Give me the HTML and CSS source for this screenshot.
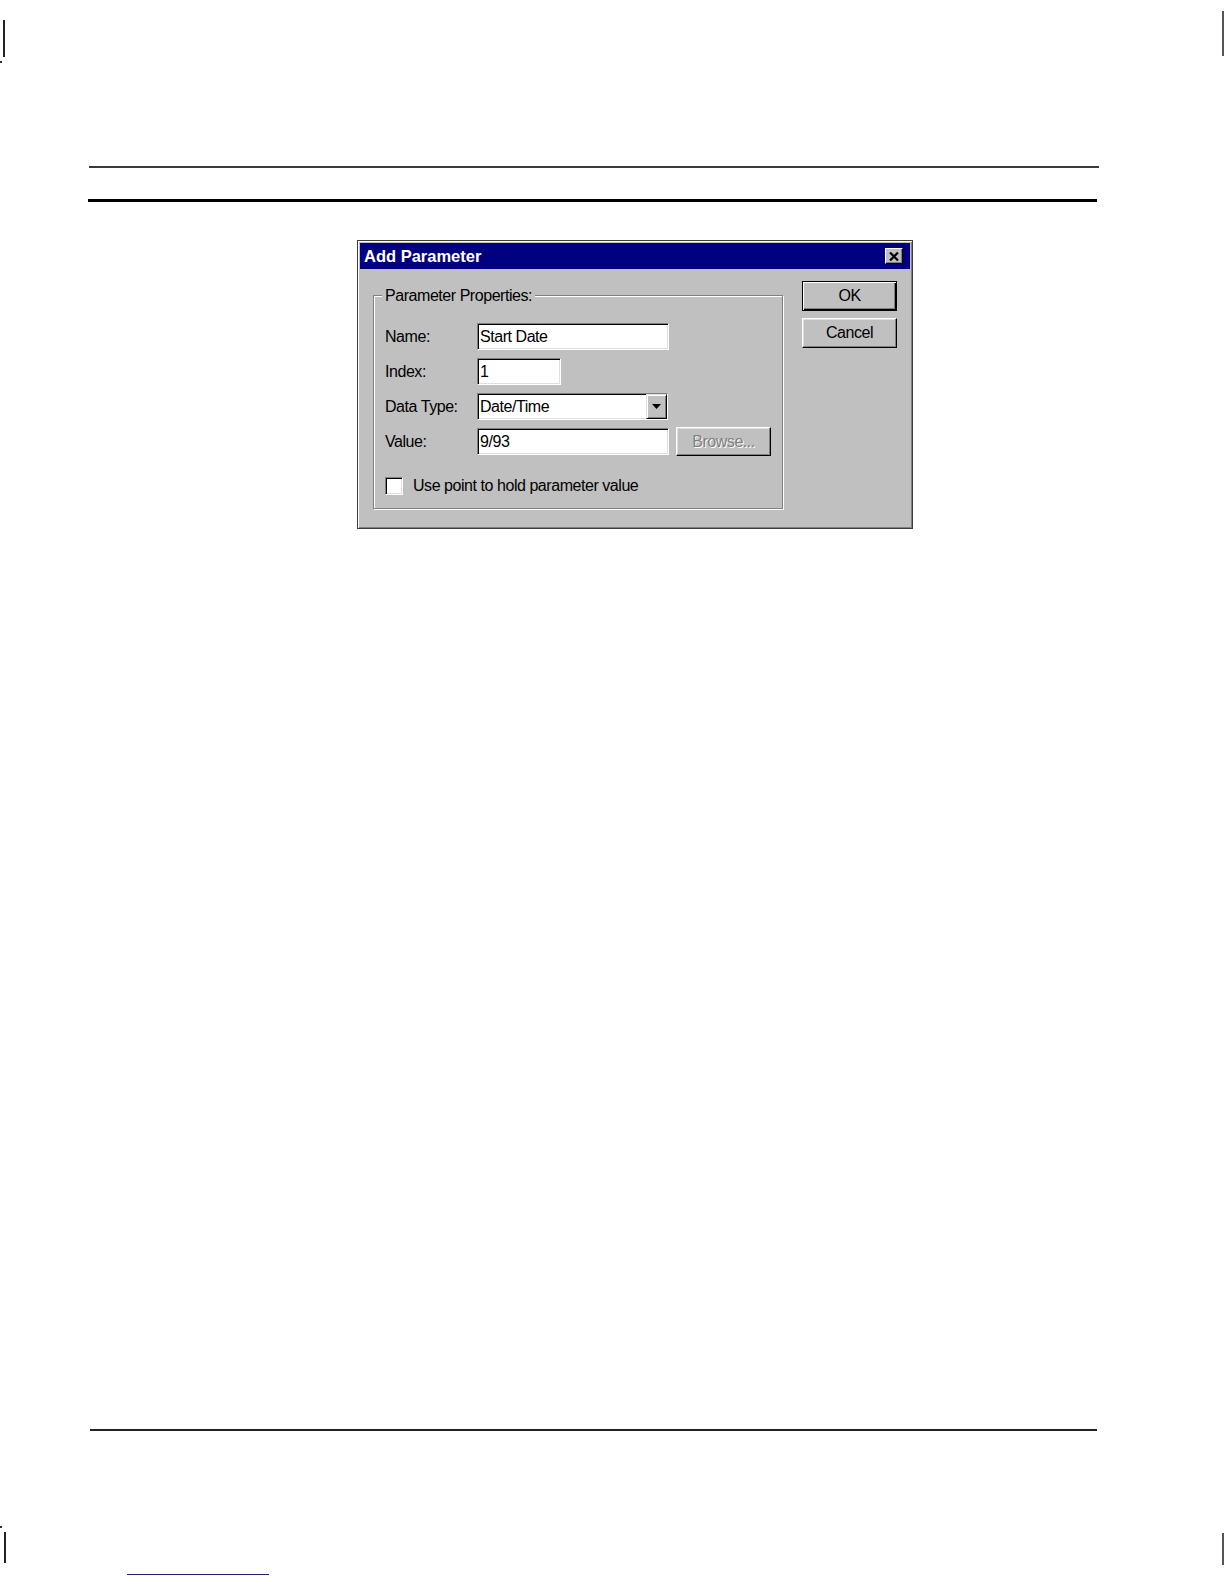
FILE: index.html
```html
<!DOCTYPE html>
<html>
<head>
<meta charset="utf-8">
<title>Add Parameter</title>
<link rel="stylesheet" href="styles.css">
</head>
<body>
<div class="page">
  <div class="mark mark-tl"></div>
  <div class="dot dot-tl"></div>
  <div class="mark mark-tr"></div>
  <div class="mark mark-bl"></div>
  <div class="dot dot-bl"></div>
  <div class="mark mark-br"></div>

  <div class="rule-top"></div>
  <div class="rule-thick"></div>

  <div class="dialog">
    <div class="titlebar">
      <span class="title">Add Parameter</span>
      <span class="close">
        <svg width="10" height="9" viewBox="0 0 10 9"><path d="M1 0.5 L9 8.5 M9 0.5 L1 8.5" stroke="#000" stroke-width="2.2" fill="none"/></svg>
      </span>
    </div>
    <div class="dlg-body">
      <div class="group">
        <span class="legend">Parameter Properties:</span>
        <div class="row">
          <span class="lbl">Name:</span>
          <div class="field w-name">Start Date</div>
        </div>
        <div class="row">
          <span class="lbl">Index:</span>
          <div class="field w-index">1</div>
        </div>
        <div class="row">
          <span class="lbl">Data Type:</span>
          <div class="field combo">
            <span class="combo-text">Date/Time</span>
            <span class="combo-btn">
              <svg width="9" height="5" viewBox="0 0 9 5"><polygon points="0,0 9,0 4.5,5" fill="#000"/></svg>
            </span>
          </div>
        </div>
        <div class="row">
          <span class="lbl">Value:</span>
          <div class="field w-value">9/93</div>
          <div class="btn browse">Browse...</div>
        </div>
        <div class="check-row">
          <span class="checkbox"></span>
          <span class="check-label">Use point to hold parameter value</span>
        </div>
      </div>
      <div class="buttons">
        <div class="btn default">OK</div>
        <div class="btn">Cancel</div>
      </div>
    </div>
  </div>

  <div class="rule-bottom"></div>
  <div class="link-line"></div>
</div>
</body>
</html>
```

FILE: styles.css
```css
html, body {
  margin: 0;
  padding: 0;
  background: #ffffff;
}

.page {
  position: relative;
  display: flow-root;
  width: 1224px;
  height: 1584px;
  font-family: "Liberation Sans", Arial, sans-serif;
  color: #000;
}

/* print crop marks */
.mark {
  position: absolute;
  width: 2px;
  background: #222;
}
.mark-tl { left: 3px; top: 20px; height: 37px; }
.mark-tr { left: 1222px; top: 11px; height: 45px; background: #555; }
.mark-bl { left: 4px; top: 1532px; height: 31px; }
.mark-br { left: 1222px; top: 1533px; height: 32px; background: #555; }
.dot {
  position: absolute;
  width: 2px;
  height: 2px;
  background: #333;
}
.dot-tl { left: 0; top: 61px; }
.dot-bl { left: 0; top: 1526px; }

/* rules */
.rule-top {
  margin: 166px 0 0 89px;
  width: 1010px;
  height: 2px;
  background: #3a3a3a;
}
.rule-thick {
  margin: 31px 0 0 88px;
  width: 1009px;
  height: 3px;
  background: #000;
}
.rule-bottom {
  margin: 900px 0 0 90px;
  width: 1007px;
  height: 2px;
  background: #222;
}
.link-line {
  margin: 143px 0 0 127px;
  width: 142px;
  height: 1px;
  background: #23236b;
}

/* dialog */
.dialog {
  box-sizing: border-box;
  margin: 38px 0 0 357px;
  width: 556px;
  height: 289px;
  border: 1px solid #3c3c3c;
  padding: 2px;
  background: #c0c0c0;
  box-shadow: inset 1px 1px 0 #ffffff, inset -1px -1px 0 #808080;
  font-size: 16px;
  letter-spacing: -0.45px;
}

.titlebar {
  height: 26px;
  background: #000080;
  color: #fff;
  display: flex;
  align-items: center;
  justify-content: space-between;
  padding: 0 7px 0 4px;
}
.title {
  font-weight: bold;
  font-size: 16.5px;
  letter-spacing: 0;
}
.close {
  box-sizing: border-box;
  width: 18px;
  height: 16px;
  background: #c0c0c0;
  border: 1px solid;
  border-color: #ffffff #000 #000 #ffffff;
  box-shadow: inset -1px -1px 0 #808080;
  display: flex;
  align-items: center;
  justify-content: center;
}
.close svg { display: block; }

.dlg-body {
  display: flex;
  align-items: flex-start;
  gap: 19px;
  padding-left: 13px;
}

.group {
  position: relative;
  box-sizing: border-box;
  width: 410px;
  margin-top: 26px;
  border: 1px solid #808080;
  box-shadow: inset 1px 1px 0 #ffffff, 1px 1px 0 #ffffff;
  padding: 27px 11px 13px 11px;
}
.legend {
  position: absolute;
  top: -9px;
  left: 8px;
  padding: 0 3px;
  background: #c0c0c0;
  line-height: 17px;
}

.row {
  display: flex;
  align-items: center;
  height: 27px;
}
.row + .row { margin-top: 8px; }

.lbl {
  width: 92px;
  flex-shrink: 0;
}

.field {
  box-sizing: border-box;
  height: 27px;
  background: #fff;
  border: 1px solid;
  border-color: #808080 #ffffff #ffffff #808080;
  box-shadow: inset 1px 1px 0 #000, inset -1px -1px 0 #dfdfdf;
  padding-left: 2px;
  display: flex;
  align-items: center;
  white-space: nowrap;
}
.w-name { width: 192px; }
.w-index { width: 84px; }
.w-value { width: 192px; }

.combo {
  width: 191px;
  align-items: stretch;
  padding-right: 0;
}
.combo-text {
  flex: 1;
  display: flex;
  align-items: center;
}
.combo-btn {
  box-sizing: border-box;
  width: 21px;
  background: #c0c0c0;
  border: 1px solid;
  border-color: #dfdfdf #000 #000 #dfdfdf;
  box-shadow: inset 1px 1px 0 #ffffff, inset -1px -1px 0 #808080;
  display: flex;
  align-items: center;
  justify-content: center;
}
.combo-btn svg { display: block; }

.btn {
  box-sizing: border-box;
  width: 95px;
  height: 30px;
  background: #c0c0c0;
  border: 1px solid;
  border-color: #ffffff #000 #000 #ffffff;
  box-shadow: inset -1px -1px 0 #808080, inset 1px 1px 0 #dfdfdf;
  display: flex;
  align-items: center;
  justify-content: center;
}
.btn.default {
  border-color: #000;
  box-shadow: inset 1px 1px 0 #ffffff, inset -1px -1px 0 #000, inset -2px -2px 0 #808080;
}
.browse {
  margin-left: 7px;
  height: 29px;
  color: #808080;
  text-shadow: 1px 1px 0 #ffffff;
}

.buttons {
  display: flex;
  flex-direction: column;
  gap: 7px;
  margin-top: 12px;
}

.check-row {
  display: flex;
  align-items: center;
  gap: 10px;
  margin-top: 22px;
  height: 18px;
}
.checkbox {
  box-sizing: border-box;
  width: 18px;
  height: 18px;
  background: #fff;
  border: 1px solid;
  border-color: #808080 #ffffff #ffffff #808080;
  box-shadow: inset 1px 1px 0 #000, inset -1px -1px 0 #dfdfdf;
}
```
